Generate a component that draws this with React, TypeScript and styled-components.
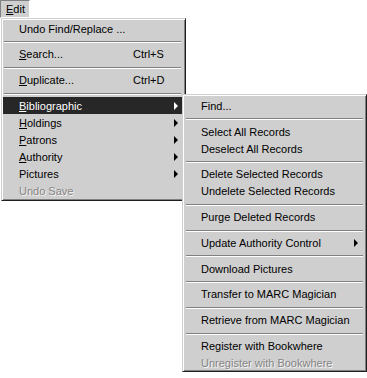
import React from 'react'
import styled, { createGlobalStyle } from 'styled-components'

const GlobalStyle = createGlobalStyle`
  html, body {
    margin: 0;
    padding: 0;
    background: #ffffff;
  }
  body {
    font-family: "Liberation Sans", Arial, sans-serif;
    font-size: 11px;
    color: #000;
  }
`

const FACE = '#cfcfcf'

const Screen = styled.div`
  position: relative;
  width: 367px;
  height: 378px;
  overflow: hidden;
  background: #fff;
`

const MenuBar = styled.div`
  display: flex;
  height: 18px;
`

const BarItem = styled.div`
  box-sizing: border-box;
  width: 30px;
  height: 18px;
  padding-left: 5px;
  line-height: 16px;
  background: ${FACE};
  border-style: solid;
  border-width: 1px;
  border-color: #808080 #ffffff #ffffff #808080;
`

const Popup = styled.div<{ $top: number; $left: number; $width: number }>`
  position: absolute;
  top: ${(p) => p.$top}px;
  left: ${(p) => p.$left}px;
  width: ${(p) => p.$width}px;
  box-sizing: border-box;
  background: ${FACE};
  border: 1px solid;
  border-color: ${FACE} #202020 #202020 ${FACE};
  box-shadow: inset 1px 1px #ffffff, inset -1px -1px #808080;
  padding: 1px 3px 1px 1px;
  z-index: 1;
`

const SubPopup = styled(Popup)`
  padding: 2px 2px 0 2px;
  z-index: 2;
`

const Row = styled.div<{ $active?: boolean; $gap: number }>`
  position: relative;
  display: flex;
  align-items: center;
  height: 17px;
  padding: 0 ${(p) => p.$gap}px 0 16px;
  background: ${(p) => (p.$active ? '#272727' : 'transparent')};
  color: ${(p) => (p.$active ? '#ffffff' : '#000000')};
  white-space: nowrap;
`

const Label = styled.span<{ $width?: number; $disabled?: boolean }>`
  flex: ${(p) => (p.$width ? `0 0 ${p.$width}px` : '1')};
  color: ${(p) => (p.$disabled ? '#858585' : 'inherit')};
  text-shadow: ${(p) => (p.$disabled ? '1px 1px #f4f4f4' : 'none')};
`

const Shortcut = styled.span`
  flex: 1;
`

const Key = styled.u`
  text-decoration: underline;
  text-underline-offset: 1px;
`

const Arrow = styled.span`
  width: 0;
  height: 0;
  border-left: 4px solid currentColor;
  border-top: 4px solid transparent;
  border-bottom: 4px solid transparent;
`

const Separator = styled.div`
  height: 0;
  margin: 4px 1px 2.75px;
  border-top: 1px solid #808080;
  border-bottom: 1px solid #ffffff;
`

type Item = { label: string; key?: number; shortcut?: string; sub?: boolean; disabled?: boolean } | 'sep'

const mainItems: Item[] = [
  { label: 'Undo Find/Replace ...' },
  'sep',
  { label: 'Search...', key: 0, shortcut: 'Ctrl+S' },
  'sep',
  { label: 'Duplicate...', key: 0, shortcut: 'Ctrl+D' },
  'sep',
  { label: 'Bibliographic', key: 0, sub: true },
  { label: 'Holdings', key: 0, sub: true },
  { label: 'Patrons', key: 0, sub: true },
  { label: 'Authority', key: 0, sub: true },
  { label: 'Pictures', sub: true },
  { label: 'Undo Save', disabled: true },
]

const subItems: Item[] = [
  { label: 'Find...' },
  'sep',
  { label: 'Select All Records' },
  { label: 'Deselect All Records' },
  'sep',
  { label: 'Delete Selected Records' },
  { label: 'Undelete Selected Records' },
  'sep',
  { label: 'Purge Deleted Records' },
  'sep',
  { label: 'Update Authority Control', sub: true },
  'sep',
  { label: 'Download Pictures' },
  'sep',
  { label: 'Transfer to MARC Magician' },
  'sep',
  { label: 'Retrieve from MARC Magician' },
  'sep',
  { label: 'Register with Bookwhere' },
  { label: 'Unregister with Bookwhere', disabled: true },
]

function renderLabel(label: string, key?: number) {
  if (key === undefined) return label
  return (
    <>
      {label.slice(0, key)}
      <Key>{label[key]}</Key>
      {label.slice(key + 1)}
    </>
  )
}

function SubMenu() {
  return (
    <SubPopup $top={-3} $left={179} $width={185}>
      {subItems.map((it, i) =>
        it === 'sep' ? (
          <Separator key={i} />
        ) : (
          <Row key={i} $gap={6}>
            <Label $disabled={it.disabled}>{it.label}</Label>
            {it.sub && <Arrow />}
          </Row>
        )
      )}
    </SubPopup>
  )
}

export default function App() {
  return (
    <Screen>
      <GlobalStyle />
      <MenuBar>
        <BarItem>
          <Key>E</Key>dit
        </BarItem>
      </MenuBar>
      <Popup $top={18} $left={1} $width={185}>
        {mainItems.map((it, i) =>
          it === 'sep' ? (
            <Separator key={i} />
          ) : (
            <Row key={i} $gap={4} $active={it.label === 'Bibliographic'}>
              <Label $width={it.shortcut ? 114 : undefined} $disabled={it.disabled}>
                {renderLabel(it.label, it.key)}
              </Label>
              {it.shortcut && <Shortcut>{it.shortcut}</Shortcut>}
              {it.sub && <Arrow />}
              {it.label === 'Bibliographic' && <SubMenu />}
            </Row>
          )
        )}
      </Popup>
    </Screen>
  )
}
